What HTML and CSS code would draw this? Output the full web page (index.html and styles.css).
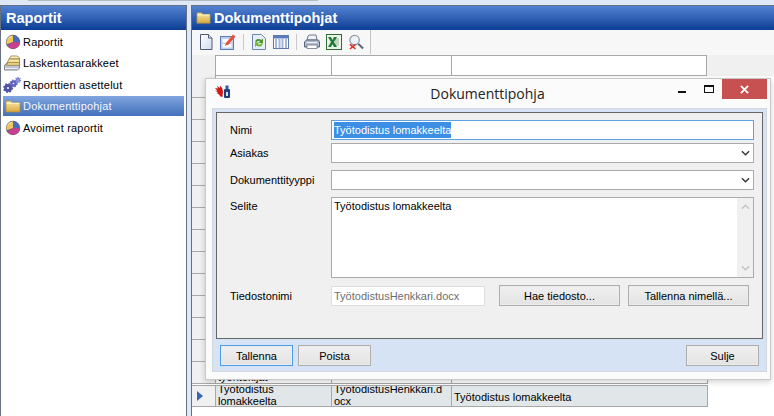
FILE: index.html
```html
<!DOCTYPE html>
<html lang="fi">
<head>
    <meta charset="UTF-8">
    <title>Dokumenttipohjat</title>
    <link rel="stylesheet" href="styles.css">
</head>
<body>

    <!-- shared icons -->
    <svg class="icon-defs">
        <defs>
            <linearGradient id="folderFill" x1="0" y1="0" x2="0" y2="1">
                <stop offset="0" stop-color="#fbe9a8"/>
                <stop offset="1" stop-color="#d8a93e"/>
            </linearGradient>
            <linearGradient id="pageFill" x1="0" y1="0" x2="1" y2="1">
                <stop offset="0" stop-color="#ffffff"/>
                <stop offset="1" stop-color="#cfdcf0"/>
            </linearGradient>
        </defs>
        <symbol id="icon-pie" viewBox="0 0 16 16">
            <circle cx="8" cy="8" r="7.200" fill="#5f6278"/>
            <path d="M8 8V1.400A6.600 6.600 0 0 0 1.800 10.200z" fill="#eec65a"/>
            <path d="M8 8V1.400A6.600 6.600 0 0 1 14.600 8.600z" fill="#4a6cc0"/>
            <path d="M8 8l6.600.6A6.600 6.600 0 0 1 2.600 11.800z" fill="#c8408e"/>
            <path d="M3.400 4.400A5.600 5.600 0 0 1 6.500 2.400" fill="none" stroke="#fff4c8" stroke-width="1"/>
        </symbol>
        <symbol id="icon-folder" viewBox="0 0 16 16">
            <path d="M1 3h5l1.200 1.500H15V14H1z" fill="url(#folderFill)" stroke="#a98a45" stroke-width=".8"/>
            <path d="M1.500 5.300h13" stroke="#fff6cf" stroke-width="1"/>
        </symbol>
    </svg>

    <div class="top-strip"><div class="top-strip-bar"></div></div>

    <div class="app">
        <!-- left menu -->
        <aside class="side-panel">
            <div class="panel-title">Raportit</div>
            <ul class="side-menu">
                <li class="side-item">
                    <svg class="side-icon"><use href="#icon-pie"/></svg>Raportit
                </li>
                <li class="side-item">
                    <svg class="side-icon side-icon-wide" viewBox="0 0 18 17">
                        <path d="M1 11l3-3h13v6l-2 2H1z" fill="#c3c7d4" stroke="#5f6374" stroke-width=".8"/>
                        <path d="M1.500 14.500h14" stroke="#f2f3f8" stroke-width="1"/>
                        <path d="M3 11l2-4h12v4z" fill="#f0d282" stroke="#8d7840" stroke-width=".8"/>
                        <path d="M4 8l2-4h11v4z" fill="#f6e09a" stroke="#8d7840" stroke-width=".8"/>
                        <path d="M6 4l2-3h6l2 1 1 2z" fill="#fbeebb" stroke="#8d7840" stroke-width=".8"/>
                    </svg>Laskentasarakkeet
                </li>
                <li class="side-item">
                    <svg class="side-icon side-icon-wide" viewBox="0 0 18 16">
                        <circle cx="5" cy="11" r="2.500" fill="none" stroke="#4f52a6" stroke-width="3"/>
                        <circle cx="5" cy="11" r="4.200" fill="none" stroke="#4f52a6" stroke-width="1.600" stroke-dasharray="1.700 1.600"/>
                        <circle cx="10.500" cy="6.500" r="2" fill="none" stroke="#6366bc" stroke-width="2.400"/>
                        <circle cx="10.500" cy="6.500" r="3.400" fill="none" stroke="#6366bc" stroke-width="1.400" stroke-dasharray="1.500 1.300"/>
                        <circle cx="15" cy="3" r="1.400" fill="none" stroke="#7c80d0" stroke-width="1.800"/>
                        <circle cx="15" cy="3" r="2.500" fill="none" stroke="#7c80d0" stroke-width="1.200" stroke-dasharray="1.200 1"/>
                    </svg>Raporttien asettelut
                </li>
                <li class="side-item side-item-active">
                    <svg class="side-icon"><use href="#icon-folder"/></svg>Dokumenttipohjat
                </li>
                <li class="side-item">
                    <svg class="side-icon"><use href="#icon-pie"/></svg>Avoimet raportit
                </li>
            </ul>
        </aside>

        <!-- main area -->
        <main class="main-panel">
            <div class="panel-title panel-title-main">
                <svg class="title-icon"><use href="#icon-folder"/></svg>Dokumenttipohjat
            </div>
            <div class="toolbar-row">
                <div class="toolbar">
                    <svg class="tool" viewBox="0 0 16 16">
                        <path d="M2.500 .5h8l3.500 3.500v11.500H2.500z" fill="url(#pageFill)" stroke="#4f5c74"/>
                        <path d="M10.500 .5v3.500h3.500" fill="#dfe6f2" stroke="#4f5c74"/>
                    </svg>
                    <svg class="tool" viewBox="0 0 16 16">
                        <rect x=".5" y="2.500" width="13" height="13" fill="#bcd0ee" stroke="#5b7cb4"/>
                        <rect x="2.500" y="5" width="9" height="3.500" fill="#ffffff"/>
                        <rect x="2.500" y="10" width="9" height="3.500" fill="#ffffff"/>
                        <path d="M6 9l7-8.500 2.500 2-7 8-3.500 1.500z" fill="#e8503a"/>
                    </svg>
                    <span class="tool-sep"></span>
                    <svg class="tool" viewBox="0 0 16 16">
                        <path d="M1.500 .5h9l4 4v11h-13z" fill="#e6eefa" stroke="#6d86ae"/>
                        <path d="M4 8a3.800 3.800 0 0 1 6.400-2L12 4.500v4.500H7.500l1.500-1.500a2 2 0 0 0-3.300 .9z" fill="#4e9a28"/>
                        <path d="M12 9.500a3.800 3.800 0 0 1-6.400 2L4 13V8.500h4.500L7 10a2 2 0 0 0 3.300-.7z" fill="#6fb52f"/>
                    </svg>
                    <svg class="tool" viewBox="0 0 16 16">
                        <rect x=".5" y="1.500" width="15" height="13" fill="#ffffff" stroke="#6079a8"/>
                        <rect x="1" y="2" width="14" height="2.500" fill="#5c7cc0"/>
                        <path d="M3 5v9M6.500 5v9M9.500 5v9M13 5v9" stroke="#a5b8dc" stroke-width="2"/>
                    </svg>
                    <span class="tool-sep"></span>
                    <svg class="tool" viewBox="0 0 16 16">
                        <path d="M4 2l1-1h7l1 5H3z" fill="#f2f4f8" stroke="#6f7a8e"/>
                        <path d="M.5 8l2-2h12l1 2v5H.5z" fill="#b3bccd" stroke="#59647a"/>
                        <rect x="3" y="11" width="10" height="3.500" fill="#ffffff" stroke="#59647a" stroke-width=".7"/>
                        <path d="M3 8.500h10" stroke="#eef1f6"/>
                    </svg>
                    <svg class="tool" viewBox="0 0 16 16">
                        <rect x=".5" y=".5" width="15" height="15" fill="#e8f2e6" stroke="#2f6b30"/>
                        <rect x="8" y="3" width="6" height="10" fill="#ffffff"/>
                        <path d="M9 5h4M9 7h4M9 9h4M9 11h4" stroke="#7fae7c"/>
                        <path d="M2 3h3l1.500 3L8 3h3L8 8l3 5H8L6.500 10 5 13H2l3-5z" fill="#1e7a34"/>
                    </svg>
                    <svg class="tool" viewBox="0 0 17 17">
                        <circle cx="7" cy="6.500" r="5" fill="#eef3f8" stroke="#8e99a8" stroke-width="1.300"/>
                        <path d="M11 10.500l5 5" stroke="#5c6675" stroke-width="2.200"/>
                        <path d="M2 11l6 5M8 11l-6 5" stroke="#dc2a20" stroke-width="1.500"/>
                    </svg>
                </div>
            </div>

            <div class="data-grid">
                <div class="grid-head"><span></span><span></span><span></span></div>
                <div class="grid-row"><span class="row-head"></span></div>
                <div class="grid-row"><span class="row-head"></span></div>
                <div class="grid-row"><span class="row-head"></span></div>
                <div class="grid-row"><span class="row-head"></span></div>
                <div class="grid-row"><span class="row-head"></span></div>
                <div class="grid-row"><span class="row-head"></span></div>
                <div class="grid-row"><span class="row-head"></span></div>
                <div class="grid-row"><span class="row-head"></span></div>
                <div class="grid-row"><span class="row-head"></span></div>
                <div class="grid-row"><span class="row-head"></span></div>
                <div class="grid-row"><span class="row-head"></span></div>
                <div class="grid-row"><span class="row-head"></span></div>
                <div class="grid-row"><span class="row-head"></span></div>
                <div class="grid-row grid-row-clipped">
                    <span class="row-head"></span>
                    <span class="cell cell-bottom">työntekijät</span>
                    <span class="cell"></span>
                    <span class="cell"></span>
                </div>
                <div class="grid-row grid-row-current">
                    <span class="row-head"><i class="row-arrow"></i></span>
                    <span class="cell">Työtodistus lomakkeelta</span>
                    <span class="cell cell-file">TyötodistusHenkkari.docx</span>
                    <span class="cell cell-plain">Työtodistus lomakkeelta</span>
                </div>
            </div>
        </main>
    </div>

    <!-- dialog -->
    <section class="dialog">
        <header class="dialog-title">
            <div class="dialog-title-left">
                <svg class="app-icon" viewBox="0 0 16 16">
                    <path d="M0 4l3 .5L2 2l3 2 0-2.500L7 4l1 3-.5 6-2-.5-2-2.500-2-1 1.500-.5L0 6.500l2.500 .5z" fill="#d01818"/>
                    <rect x="9" y="5" width="6" height="9" rx="1" fill="#1d3f7c"/>
                    <rect x="10.500" y="1.500" width="3" height="4" fill="#2c5aa8"/>
                    <rect x="11" y="8" width="2" height="4" fill="#d7e2f4"/>
                </svg>
            </div>
            <div class="dialog-caption">Dokumenttipohja</div>
            <div class="dialog-controls">
                <span class="win-min"></span>
                <span class="win-max"></span>
                <span class="win-close">
                    <svg viewBox="0 0 10 10" class="win-close-x"><path d="M1 1l8 8M9 1l-8 8" stroke="#ffffff" stroke-width="2"/></svg>
                </span>
            </div>
        </header>

        <div class="dialog-body">
            <div class="form-group">
                <div class="field field-tight">
                    <label class="field-label">Nimi</label>
                    <div class="input input-focus"><span class="selected-text">Työtodistus lomakkeelta</span></div>
                </div>
                <div class="field">
                    <label class="field-label">Asiakas</label>
                    <div class="input input-select">
                        <svg class="chevron" viewBox="0 0 10 6"><path d="M1 1l4 4 4-4" fill="none" stroke="#333" stroke-width="1.500"/></svg>
                    </div>
                </div>
                <div class="field">
                    <label class="field-label">Dokumenttityyppi</label>
                    <div class="input input-select">
                        <svg class="chevron" viewBox="0 0 10 6"><path d="M1 1l4 4 4-4" fill="none" stroke="#333" stroke-width="1.500"/></svg>
                    </div>
                </div>
                <div class="field field-area">
                    <label class="field-label field-label-top">Selite</label>
                    <div class="input input-area">
                        <div class="area-text">Työtodistus lomakkeelta</div>
                        <div class="scrollbar">
                            <svg class="scroll-arrow" viewBox="0 0 10 6"><path d="M1 5l4-4 4 4" fill="none" stroke="#c4c4c4" stroke-width="1.500"/></svg>
                            <svg class="scroll-arrow" viewBox="0 0 10 6"><path d="M1 1l4 4 4-4" fill="none" stroke="#c4c4c4" stroke-width="1.500"/></svg>
                        </div>
                    </div>
                </div>
                <div class="field field-file">
                    <label class="field-label">Tiedostonimi</label>
                    <div class="input input-readonly">TyötodistusHenkkari.docx</div>
                    <button class="btn btn-wide">Hae tiedosto...</button>
                    <button class="btn btn-wide">Tallenna nimellä...</button>
                </div>
            </div>

            <div class="dialog-actions">
                <button class="btn btn-default">Tallenna</button>
                <button class="btn">Poista</button>
                <button class="btn btn-end">Sulje</button>
            </div>
        </div>
    </section>

</body>
</html>
```

FILE: styles.css
```css
* {
    box-sizing: border-box;
}

html, body {
    margin: 0;
    height: 416px;
    overflow: hidden;
}

body {
    position: relative;
    font-family: "Liberation Sans", Arial, sans-serif;
    font-size: 11px;
    color: #000;
    background-color: #dfe8f6;
}

.icon-defs {
    display: block;
    width: 0;
    height: 0;
}

.top-strip {
    height: 5px;
}

.top-strip-bar {
    width: 290px;
    height: 1px;
    margin-left: 28px;
    background-color: #b4bac4;
}

.app {
    display: flex;
    height: 411px;
    gap: 4px;
}

/* Panels */
.side-panel {
    width: 187px;
    background-color: #fff;
    border: 1px solid #667080;
    border-bottom: 0;
}

.main-panel {
    flex: 1;
    display: flex;
    flex-direction: column;
    background-color: #fff;
    border-left: 1px solid #667080;
    border-top: 1px solid #667080;
}

.panel-title {
    display: flex;
    align-items: center;
    height: 24px;
    padding: 0 0 1px 5px;
    color: #fff;
    font-size: 14.5px;
    font-weight: bold;
    background: linear-gradient(to bottom, #5482d2, #0b3f95);
}

.panel-title-main {
    padding-left: 4px;
}

.title-icon {
    width: 15px;
    height: 15px;
    margin-right: 3px;
}

/* Left menu */
.side-menu {
    list-style: none;
    margin: 0;
    padding: 1px 2px;
    display: flex;
    flex-direction: column;
    gap: 1.5px;
}

.side-item {
    display: flex;
    align-items: center;
    height: 20px;
    padding-top: 1px;
    letter-spacing: 0.2px;
    white-space: nowrap;
}

.side-item-active {
    color: #f4f7fd;
    background: linear-gradient(to bottom, #81a5df, #4270bc);
}

.side-icon {
    width: 16px;
    height: 16px;
    margin: 0 2px;
    flex: none;
}

.side-icon-wide {
    width: 18px;
    margin-left: 0;
}

/* Toolbar */
.toolbar-row {
    background-color: #f7f7f7;
    height: 25px;
}

.toolbar {
    display: flex;
    align-items: center;
    gap: 6px;
    width: 179px;
    height: 24px;
    padding-left: 6px;
    border-right: 1px solid #c4c4c4;
}

.tool {
    width: 16px;
    height: 16px;
    flex: none;
}

.tool-sep {
    width: 1px;
    height: 16px;
    margin: 0 1px;
    background-color: #c8c8c8;
}

/* Grid behind the dialog */
.data-grid {
    flex: 1;
    overflow: hidden;
}

.grid-head {
    display: grid;
    grid-template-columns: 116px 120px 256px;
    height: 21px;
    padding-left: 23px;
    background-color: #f0f0f0;
}

.grid-head span {
    background-color: #fff;
    border: 1px solid #a8a8a8;
    border-right-width: 0;
}

.grid-head span:last-child {
    border-right-width: 1px;
}

.grid-row {
    display: grid;
    grid-template-columns: 24px 116px 120px 256px;
    height: 22px;
}

.row-head {
    display: flex;
    align-items: center;
    padding-left: 5px;
    background-color: #f0f0f0;
    border-bottom: 1px solid #a8a8a8;
    border-right: 1px solid #a8a8a8;
}

.row-arrow {
    width: 0;
    height: 0;
    border-left: 6px solid #3a66b8;
    border-top: 5px solid transparent;
    border-bottom: 5px solid transparent;
}

.cell {
    display: flex;
    align-items: center;
    padding: 0 1px 0 2px;
    line-height: 12px;
    overflow: hidden;
    border-right: 1px solid #a8a8a8;
    border-bottom: 1px solid #a8a8a8;
}

.cell-bottom {
    align-items: flex-end;
}

.cell-file {
    padding-right: 5px;
    word-break: break-all;
}

.grid-row-current {
    margin-top: 1px;
}

.grid-row-current .cell {
    padding-bottom: 2px;
    background-color: #e1e6e9;
    border-top: 1px solid #a8a8a8;
}

.grid-row-current .cell-plain {
    padding: 2px 0 0 2px;
}

.grid-row-current .row-head {
    border-top: 1px solid #a8a8a8;
}

/* Dialog */
.dialog {
    position: absolute;
    left: 205px;
    top: 78px;
    width: 566px;
    height: 302px;
    display: flex;
    flex-direction: column;
    padding: 0 3px 7px 6px;
    background-color: #fbfbfb;
    border: 1px solid #c8c8c8;
    box-shadow: 0 2px 6px rgba(0, 0, 0, 0.18);
}

.dialog-title {
    display: grid;
    grid-template-columns: 1fr auto 1fr;
    height: 29px;
    flex: none;
}

.dialog-title-left {
    display: flex;
    align-items: center;
    padding-left: 3px;
}

.app-icon {
    width: 16px;
    height: 16px;
    margin-top: -4px;
}

.dialog-caption {
    margin-right: 4px;
    font-family: "Open Sans", "Liberation Sans", sans-serif;
    font-size: 14px;
    line-height: 29px;
    color: #222;
}

.dialog-controls {
    display: flex;
    justify-content: flex-end;
    align-items: flex-start;
}

.win-min {
    width: 8px;
    height: 2px;
    margin: 12px 18px 0 0;
    background-color: #111;
}

.win-max {
    width: 10px;
    height: 8px;
    margin: 6px 8px 0 0;
    border: 1px solid #111;
    border-top-width: 2px;
}

.win-close {
    display: flex;
    align-items: center;
    justify-content: center;
    width: 45px;
    height: 20px;
    background-color: #c75050;
}

.win-close-x {
    width: 9px;
    height: 9px;
}

.dialog-body {
    flex: 1;
    display: flex;
    flex-direction: column;
    padding: 3px;
    background-color: #d6e3f5;
    border: 1px solid #d3d8de;
}

.form-group {
    height: 227px;
    padding: 7px 8px 0 13px;
    background-color: #f0f0f0;
    border: 1px solid #666;
}

.field {
    display: flex;
    align-items: center;
    margin-bottom: 7px;
}

.field-tight {
    margin-bottom: 3px;
}

.field-label {
    width: 101px;
    flex: none;
}

.field-label-top {
    align-self: flex-start;
    padding-top: 3px;
}

.input {
    flex: 1;
    height: 20px;
    display: flex;
    align-items: center;
    padding-left: 2px;
    background-color: #fff;
    border: 1px solid #aaa;
}

.input-focus {
    border-color: #5ea2e2;
}

.selected-text {
    color: #fff;
    background-color: #3c8fe4;
    padding: 1px 0;
    line-height: 14px;
}

.input-select {
    justify-content: flex-end;
    padding-right: 3px;
}

.chevron {
    width: 9px;
    height: 6px;
}

.input-area {
    height: 81px;
    align-items: stretch;
    justify-content: space-between;
}

.area-text {
    padding-top: 2px;
}

.scrollbar {
    width: 16px;
    display: flex;
    flex-direction: column;
    justify-content: space-between;
    align-items: center;
    padding: 6px 0;
    background-color: #f0f0f0;
}

.scroll-arrow {
    width: 9px;
    height: 6px;
}

.input-readonly {
    flex: 0 0 154px;
    color: #6d6d6d;
    border-color: #dcdcdc;
}

.btn {
    width: 73px;
    height: 21px;
    padding: 0;
    font: inherit;
    color: #000;
    background: linear-gradient(to bottom, #f0f0f0, #e3e3e3);
    border: 1px solid #adadad;
    box-shadow: inset 0 0 0 1px #ececec;
}

.btn-wide {
    width: 121px;
    margin-left: 14px;
}

.btn-wide + .btn-wide {
    margin-left: 8px;
}

.btn-default {
    border-color: #4c9ce8;
}

.btn-end {
    margin-left: auto;
}

.dialog-actions {
    flex: 1;
    display: flex;
    gap: 5px;
    padding: 6px 4px 0;
}
```
